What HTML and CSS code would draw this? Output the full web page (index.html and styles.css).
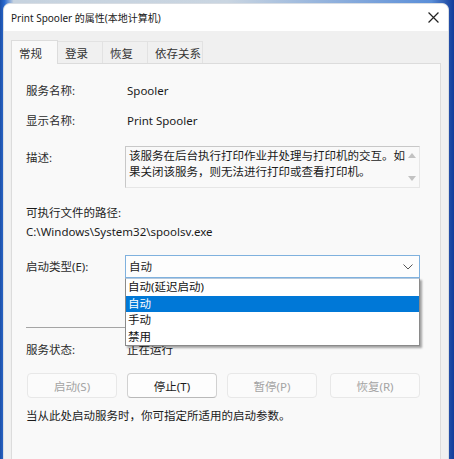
FILE: index.html
```html
<!doctype html>
<html lang="zh-CN">
  <head>
    <meta charset="utf-8">
    <title>Print Spooler 的属性(本地计算机)</title>
    <link rel="stylesheet" href="styles.css">
  </head>
  <body>
    <div class="window">
      <div class="titlebar">
        <span class="title">Print Spooler 的属性(本地计算机)</span>
        <button class="close" aria-label="Close">
          <svg viewBox="0 0 10 10" width="11" height="11">
            <path d="M0.5 0.5 L9.5 9.5 M9.5 0.5 L0.5 9.5"></path>
          </svg>
        </button>
      </div>

      <div class="tabs">
        <span class="tab active">常规</span>
        <span class="tab">登录</span>
        <span class="tab">恢复</span>
        <span class="tab wide">依存关系</span>
      </div>

      <div class="panel">
        <div class="row first">
          <span class="label">服务名称:</span>
          <span class="value">Spooler</span>
        </div>

        <div class="row">
          <span class="label">显示名称:</span>
          <span class="value">Print Spooler</span>
        </div>

        <div class="row desc">
          <span class="label">描述:</span>
          <div class="textbox">
            <p>该服务在后台执行打印作业并处理与打印机的交互。如果关闭该服务，则无法进行打印或查看打印机。</p>
            <div class="scroll">
              <svg viewBox="0 0 8 5" width="8" height="5"><path d="M0 5 L4 0 L8 5 Z"></path></svg>
              <svg viewBox="0 0 8 5" width="8" height="5"><path d="M0 0 L8 0 L4 5 Z"></path></svg>
            </div>
          </div>
        </div>

        <div class="path-label">可执行文件的路径:</div>
        <div class="path">C:\Windows\System32\spoolsv.exe</div>

        <div class="row startup">
          <span class="label">启动类型(E):</span>
          <div class="combo">
            <div class="select">
              <span>自动</span>
              <svg viewBox="0 0 10 6" width="10" height="6">
                <path d="M0.5 0.5 L5 5 L9.5 0.5"></path>
              </svg>
            </div>
            <ul class="options">
              <li>自动(延迟启动)</li>
              <li class="selected">自动</li>
              <li>手动</li>
              <li>禁用</li>
            </ul>
          </div>
        </div>

        <hr class="sep">

        <div class="row status">
          <span class="label">服务状态:</span>
          <span class="value">正在运行</span>
        </div>

        <div class="buttons">
          <button disabled>启动(S)</button>
          <button>停止(T)</button>
          <button disabled>暂停(P)</button>
          <button disabled class="last">恢复(R)</button>
        </div>

        <p class="note">当从此处启动服务时，你可指定所适用的启动参数。</p>
      </div>
    </div>
  </body>
</html>
```

FILE: styles.css
```css
html {
  box-sizing: border-box;
}

*, *:before, *:after {
  box-sizing: inherit;
}

body {
  margin: 0;
  height: 459px;
  overflow: hidden;
  font-family: "Segoe UI", "Noto Sans", "Noto Sans CJK SC", sans-serif;
  font-size: 11.5px;
  color: #1b1b1b;
  background: linear-gradient(90deg, #1c4fa8 0%, #2a6ad0 1%, #c7d3df 3%, #c9d5e1 50%, #5a8ed8 95%, #123c9a 100%);
}

.window {
  margin: 3px 5px 0 3px;
  height: 456px;
  background: #f0f0f0;
  border-radius: 7px 7px 0 0;
  border: 1px solid #d8dde3;
  border-bottom: none;
  overflow: hidden;
}

.titlebar {
  display: flex;
  align-items: center;
  justify-content: space-between;
  height: 27px;
  background: #fff;
  padding: 0 6px 0 7px;
}

.title {
  font-size: 10px;
  color: #1a1a1a;
}

.close {
  background: none;
  border: none;
  padding: 0 3px;
  line-height: 0;
}

.close path {
  stroke: #222;
  stroke-width: 1.1;
  fill: none;
}

.tabs {
  display: flex;
  align-items: flex-end;
  height: 32px;
  padding: 0 0 0 7px;
}

.tab {
  display: flex;
  align-items: center;
  height: 22px;
  width: 45px;
  padding: 0 0 0 7px;
  border: 1px solid #e2e2e2;
  border-bottom: none;
  border-left: none;
  color: #333;
  font-size: 11.5px;
}

.tab.wide {
  width: 55px;
}

.tab.active {
  width: 47px;
  height: 24px;
  background: #f9f9f9;
  border: 1px solid #dcdcdc;
  border-bottom: none;
  position: relative;
  top: 1px;
  z-index: 1;
}

.panel {
  margin: 0 7px 0 7px;
  height: 400px;
  background: #f9f9f9;
  border: 1px solid #dcdcdc;
  padding: 19px 20px 0 14px;
}

.row {
  display: flex;
  align-items: center;
  line-height: 16px;
  margin-top: 14px;
}

.row.first {
  margin-top: 0;
}

.label {
  width: 99px;
  flex: none;
  color: #2b2b2b;
}

.value {
  padding-left: 2px;
}

.row.desc {
  align-items: flex-start;
  margin-top: 17px;
}

.row.desc .label {
  margin-top: 4px;
}

.textbox {
  display: flex;
  flex: 1;
  height: 42px;
  border: 1px solid #c8c8c8;
  border-right-color: #e6e6e6;
  border-bottom-color: #e6e6e6;
  background: #f9f9f9;
}

.textbox p {
  flex: 1;
  margin: 0;
  padding: 1px 0 0 3px;
  line-height: 16px;
  color: #1a1a1a;
}

.scroll {
  display: flex;
  flex-direction: column;
  justify-content: space-between;
  width: 12px;
  flex: none;
  padding: 6px 0 6px 1px;
}

.scroll path {
  fill: #c2c2c2;
}

.path-label {
  margin-top: 17px;
  line-height: 16px;
}

.path {
  margin-top: 3px;
  line-height: 16px;
}

.row.startup {
  margin-top: 15px;
}

.combo {
  flex: 1;
  position: relative;
}

.select {
  display: flex;
  align-items: center;
  justify-content: space-between;
  height: 23px;
  padding: 0 6px 0 3px;
  background: #fdfdfd;
  border: 1px solid #7fb1de;
}

.select path {
  stroke: #555;
  stroke-width: 1;
  fill: none;
}

.options {
  position: absolute;
  top: 23px;
  left: 0;
  right: 0;
  margin: 0;
  padding: 0;
  list-style: none;
  background: #fff;
  border: 1px solid #8a8a8a;
  border-top-color: #b5c9de;
  box-shadow: 2px 2px 2px rgba(0, 0, 0, 0.35);
  z-index: 2;
}

.options li {
  height: 16.5px;
  line-height: 16px;
  padding-left: 2px;
  color: #111;
}

.options li.selected {
  background: #0078d7;
  color: #fff;
}

.sep {
  margin: 49px 0 0 0;
  border: none;
  border-top: 1px solid #a5a5a5;
}

.row.status {
  margin-top: 14px;
}

.buttons {
  display: flex;
  gap: 10px;
  margin-top: 15px;
  padding-left: 1px;
}

.buttons button {
  width: 90px;
  height: 25px;
  font-family: inherit;
  font-size: 11.5px;
  color: #1b1b1b;
  background: #fdfdfd;
  border: 1px solid #d1d1d1;
  border-bottom-color: #b9b9b9;
  border-radius: 4px;
}

.buttons button:disabled {
  color: #a3a3a3;
  background: #fbfbfb;
  border-color: #e8e8e8;
}

.buttons .last {
  margin-left: auto;
}

.note {
  margin: 10px 0 0 0;
  line-height: 16px;
  color: #1b1b1b;
}
```
